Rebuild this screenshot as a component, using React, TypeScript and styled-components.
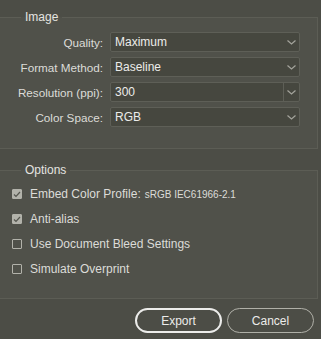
import React from 'react';
import styled, {createGlobalStyle} from 'styled-components';

const GlobalStyle = createGlobalStyle`
	html, body {
		margin: 0;
		padding: 0;
		background: #4c4d46;
		width: 321px;
		height: 339px;
		overflow: hidden;
	}
	body {
		font-family: "Liberation Sans", Arial, sans-serif;
		font-size: 12px;
		color: #dcdcd8;
	}
`

const Dialog = styled.div`
	display: flex;
	flex-direction: column;
	padding-top: 10px;
`

const Group = styled.fieldset<{ $top: number, $bottom: number }>`
	margin: 0 3px 0 -1px;
	padding: ${props => props.$top}px 16px ${props => props.$bottom}px 12px;
	border: 1px solid #5c5d55;
	background: #50514a;
	min-width: 0;

	& + & {
		margin-top: 14px;
	}
`

const Legend = styled.legend`
	margin-left: 9px;
	padding: 0 4px;
	font-size: 12px;
	line-height: 14px;
	color: #e4e4e0;
`

const FieldGrid = styled.div`
	display: grid;
	grid-template-columns: 91px 190px;
	column-gap: 7px;
	row-gap: 5px;
	align-items: center;
`

const Label = styled.label`
	text-align: right;
	white-space: nowrap;
	font-size: 11.7px;
	color: #dcdcd8;
`

const Select = styled.div`
	display: flex;
	height: 20px;
	box-sizing: border-box;
	border: 1px solid #5e5f57;
	border-radius: 2px;
	background: #46473f;
	color: #ececea;
`

const SelectValue = styled.span`
	flex: 1;
	padding-left: 4px;
	line-height: 18px;
`

const Arrow = styled.span<{ $split?: boolean }>`
	display: flex;
	align-items: center;
	justify-content: center;
	width: 15px;
	border-left: ${props => props.$split ? '1px solid #5e5f57' : 'none'};
`

const CheckList = styled.div`
	display: flex;
	flex-direction: column;
	gap: 5px;
`

const CheckRow = styled.div`
	display: flex;
	align-items: center;
	height: 20px;
	gap: 8px;
	white-space: nowrap;
`

const Box = styled.span<{ $checked: boolean }>`
	display: flex;
	align-items: center;
	justify-content: center;
	width: 10px;
	height: 10px;
	box-sizing: border-box;
	border: 1px solid #b2b2aa;
	border-radius: 1px;
	background: ${props => props.$checked ? '#b2b2aa' : 'transparent'};
`

const Profile = styled.span`
	font-size: 10px;
	margin-left: 4px;
	color: #dcdcd8;
`

const Footer = styled.div`
	display: flex;
	justify-content: flex-end;
	gap: 5px;
	padding: 9px 7px 0 0;
`

const Button = styled.button<{ $primary?: boolean }>`
	width: 87px;
	height: 25px;
	box-sizing: border-box;
	border-radius: 13px;
	border: ${props => props.$primary ? '2px solid #ececea' : '1px solid #b0b0a8'};
	background: transparent;
	color: #ececea;
	font-family: "Liberation Sans", Arial, sans-serif;
	font-size: 12px;
	padding: 0;
	cursor: pointer;
`

const Chevron = () => (
	<svg width="9" height="5" viewBox="0 0 9 5">
		<path d="M0.5 0.5 L4.5 4 L8.5 0.5" fill="none" stroke="#a4a49c" strokeWidth="1.2"/>
	</svg>
)

const Check = () => (
	<svg width="8" height="7" viewBox="0 0 8 7">
		<path d="M1 3.5 L3 5.5 L7 1" fill="none" stroke="#55564f" strokeWidth="1.2"/>
	</svg>
)

const fields = [
	{label: 'Quality:', value: 'Maximum'},
	{label: 'Format Method:', value: 'Baseline'},
	{label: 'Resolution (ppi):', value: '300', split: true},
	{label: 'Color Space:', value: 'RGB'},
]

const options = [
	{label: 'Embed Color Profile:', checked: true, extra: 'sRGB IEC61966-2.1'},
	{label: 'Anti-alias', checked: true},
	{label: 'Use Document Bleed Settings', checked: false},
	{label: 'Simulate Overprint', checked: false},
]

const App: React.FC = () => {
	return (
		<Dialog>
			<GlobalStyle/>
			<Group $top={8} $bottom={21}>
				<Legend>Image</Legend>
				<FieldGrid>
					{fields.map(item => (
						<React.Fragment key={item.label}>
							<Label>{item.label}</Label>
							<Select>
								<SelectValue>{item.value}</SelectValue>
								<Arrow $split={item.split}><Chevron/></Arrow>
							</Select>
						</React.Fragment>
					))}
				</FieldGrid>
			</Group>
			<Group $top={7} $bottom={19}>
				<Legend>Options</Legend>
				<CheckList>
					{options.map(item => (
						<CheckRow key={item.label}>
							<Box $checked={item.checked}>{item.checked && <Check/>}</Box>
							<span>
								{item.label}
								{item.extra && <Profile>{item.extra}</Profile>}
							</span>
						</CheckRow>
					))}
				</CheckList>
			</Group>
			<Footer>
				<Button $primary>Export</Button>
				<Button>Cancel</Button>
			</Footer>
		</Dialog>
	);
}

export default App;
